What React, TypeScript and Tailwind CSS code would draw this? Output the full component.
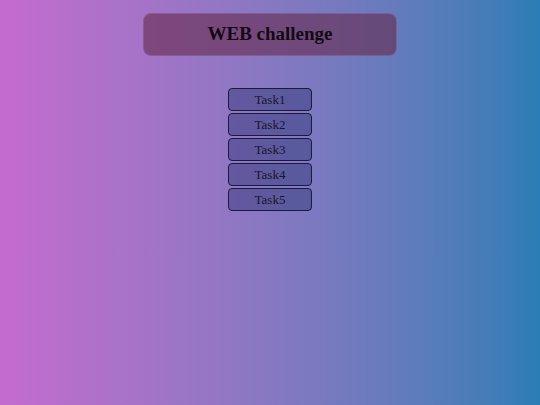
import React from "react";

const tasks = ["Task1", "Task2", "Task3", "Task4", "Task5"];

export default function App() {
  return (
    <div className="min-h-[405px] w-full bg-gradient-to-r from-[#c46bcf] to-[#2a7db5] font-['Liberation_Serif',serif] flex flex-col items-center">
      <header className="mt-[13px] w-[254px] h-[43px] rounded-lg bg-[#652a4d]/60 border border-[#8a6aa8]/60 flex items-center justify-center">
        <h1 className="text-[19px] font-bold text-[#120a14]">WEB challenge</h1>
      </header>

      <div className="mt-[32px] flex flex-col gap-[2px]">
        {tasks.map((t) => (
          <button
            key={t}
            className="w-[84px] h-[23px] rounded-[4px] border border-[#1a1a3c] bg-[#141f5e]/35 text-[13px] text-[#16162a] flex items-center justify-center"
          >
            {t}
          </button>
        ))}
      </div>
    </div>
  );
}
